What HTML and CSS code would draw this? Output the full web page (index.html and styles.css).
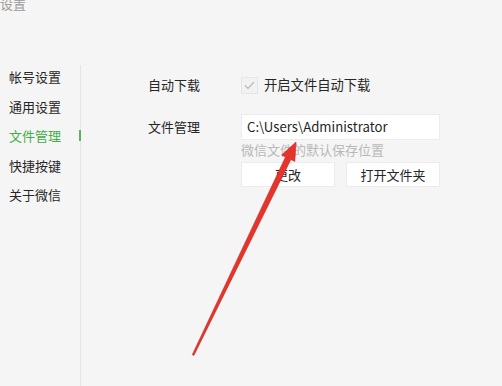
FILE: index.html
```html
<!DOCTYPE html>
<html lang="zh-CN">
<head>
<meta charset="utf-8">
<title>设置</title>
<link rel="stylesheet" href="styles.css">
</head>
<body>
<div class="window">
  <div class="title">设置</div>
  <div class="main">
    <ul class="sidebar">
      <li class="nav-item">帐号设置</li>
      <li class="nav-item">通用设置</li>
      <li class="nav-item active">文件管理</li>
      <li class="nav-item">快捷按键</li>
      <li class="nav-item">关于微信</li>
    </ul>
    <div class="content">
      <div class="row row-check">
        <div class="label">自动下载</div>
        <label class="check">
          <span class="box"><svg width="11" height="9" viewBox="0 0 11 9"><path d="M1 4.5 L4 7.5 L10 1" fill="none" stroke="#b9b9b9" stroke-width="1.2"/></svg></span>
          <span class="check-text">开启文件自动下载</span>
        </label>
      </div>
      <div class="row row-path">
        <div class="label">文件管理</div>
        <div class="field">
          <div class="input">C:\Users\Administrator</div>
          <div class="hint">微信文件的默认保存位置</div>
          <div class="buttons">
            <button class="btn">更改</button>
            <button class="btn">打开文件夹</button>
          </div>
        </div>
      </div>
    </div>
  </div>
  <svg class="arrow" width="502" height="386" viewBox="0 0 502 386">
    <polygon points="192.3,354.7 285.5,156.9 281.6,155.0 296,142 294.8,161.4 290.9,159.5 193.9,355.4" fill="#e4342c" stroke="#c42a22" stroke-width="0.6" stroke-linejoin="round"/>
  </svg>
</div>
</body>
</html>
```
FILE: styles.css
```css
* { box-sizing: border-box; }
html, body { margin: 0; padding: 0; }
body {
  background: #f5f5f5;
  font-family: "Noto Sans CJK SC", "Noto Sans", sans-serif;
  color: #2b2b2b;
  overflow: hidden;
}
.window {
  position: relative;
  width: 502px;
  height: 386px;
  background: #f5f5f5;
  overflow: hidden;
}
.title {
  font-size: 13px;
  line-height: 13px;
  height: 13px;
  margin-top: -3px;
  color: #9a9a9a;
}
.main {
  display: flex;
  margin-top: 53px;
  height: 323px;
}
.sidebar {
  list-style: none;
  margin: 0;
  padding: 0 0 0 9px;
  width: 81px;
  border-right: 1px solid #e4e4e4;
  margin-top: 2px;
}
.nav-item {
  position: relative;
  font-size: 13px;
  line-height: 29.5px;
  height: 29.5px;
  color: #262626;
}
.nav-item:first-child { margin-top: -3px; }
.nav-item.active { color: #42ad45; }
.nav-item.active::after {
  content: "";
  position: absolute;
  right: -1px;
  top: 9px;
  width: 2px;
  height: 11px;
  background: #5cb35e;
}
.content {
  padding: 13px 0 0 67px;
  flex: 1;
}
.row {
  display: grid;
  grid-template-columns: 93px 199px;
}
.label {
  font-size: 13px;
  color: #262626;
}
.row-check { align-items: center; height: 18px; }
.row-check .label { line-height: 18px; }
.check {
  display: flex;
  align-items: center;
  gap: 6px;
}
.box {
  width: 17px;
  height: 17px;
  border: 1px solid #e6e6e6;
  background: #f2f2f2;
  display: flex;
  align-items: center;
  justify-content: center;
}
.check-text { font-size: 13.3px; line-height: 18px; color: #262626; }
.row-path { margin-top: 20px; }
.row-path .label { line-height: 26px; }
.input {
  height: 26px;
  background: #ffffff;
  border: 1px solid #ececec;
  padding-left: 5px;
  font-size: 13.2px;
  line-height: 24px;
  color: #1f1f1f;
}
.hint {
  font-size: 13px;
  line-height: 16px;
  margin-top: 2px;
  color: #b8b8b8;
}
.buttons {
  display: flex;
  gap: 11px;
  margin-top: 4px;
}
.btn {
  width: 94px;
  height: 25px;
  background: #ffffff;
  border: 1px solid #ececec;
  font-family: inherit;
  font-size: 13px;
  color: #262626;
  padding: 0;
}
.arrow {
  position: absolute;
  left: 0;
  top: 0;
  pointer-events: none;
}
```
